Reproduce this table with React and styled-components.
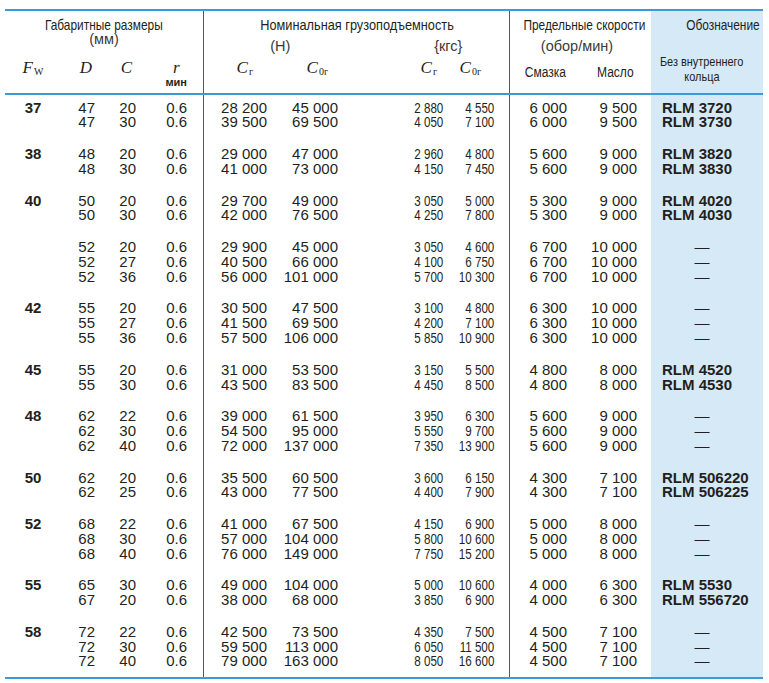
import React from "react";
import styled, { createGlobalStyle } from "styled-components";

const BLUE = "#3a9bd8";
const INK = "#231f20";

const groups = [
  {
    fw: "37",
    rows: [
      ["47", "20", "0.6", "28 200", "45 000", "2 880", "4 550", "6 000", "9 500", "RLM 3720"],
      ["47", "30", "0.6", "39 500", "69 500", "4 050", "7 100", "6 000", "9 500", "RLM 3730"],
    ],
  },
  {
    fw: "38",
    rows: [
      ["48", "20", "0.6", "29 000", "47 000", "2 960", "4 800", "5 600", "9 000", "RLM 3820"],
      ["48", "30", "0.6", "41 000", "73 000", "4 150", "7 450", "5 600", "9 000", "RLM 3830"],
    ],
  },
  {
    fw: "40",
    rows: [
      ["50", "20", "0.6", "29 700", "49 000", "3 050", "5 000", "5 300", "9 000", "RLM 4020"],
      ["50", "30", "0.6", "42 000", "76 500", "4 250", "7 800", "5 300", "9 000", "RLM 4030"],
    ],
  },
  {
    fw: "",
    rows: [
      ["52", "20", "0.6", "29 900", "45 000", "3 050", "4 600", "6 700", "10 000", null],
      ["52", "27", "0.6", "40 500", "66 000", "4 100", "6 750", "6 700", "10 000", null],
      ["52", "36", "0.6", "56 000", "101 000", "5 700", "10 300", "6 700", "10 000", null],
    ],
  },
  {
    fw: "42",
    rows: [
      ["55", "20", "0.6", "30 500", "47 500", "3 100", "4 800", "6 300", "10 000", null],
      ["55", "27", "0.6", "41 500", "69 500", "4 200", "7 100", "6 300", "10 000", null],
      ["55", "36", "0.6", "57 500", "106 000", "5 850", "10 900", "6 300", "10 000", null],
    ],
  },
  {
    fw: "45",
    rows: [
      ["55", "20", "0.6", "31 000", "53 500", "3 150", "5 500", "4 800", "8 000", "RLM 4520"],
      ["55", "30", "0.6", "43 500", "83 500", "4 450", "8 500", "4 800", "8 000", "RLM 4530"],
    ],
  },
  {
    fw: "48",
    rows: [
      ["62", "22", "0.6", "39 000", "61 500", "3 950", "6 300", "5 600", "9 000", null],
      ["62", "30", "0.6", "54 500", "95 000", "5 550", "9 700", "5 600", "9 000", null],
      ["62", "40", "0.6", "72 000", "137 000", "7 350", "13 900", "5 600", "9 000", null],
    ],
  },
  {
    fw: "50",
    rows: [
      ["62", "20", "0.6", "35 500", "60 500", "3 600", "6 150", "4 300", "7 100", "RLM 506220"],
      ["62", "25", "0.6", "43 000", "77 500", "4 400", "7 900", "4 300", "7 100", "RLM 506225"],
    ],
  },
  {
    fw: "52",
    rows: [
      ["68", "22", "0.6", "41 000", "67 500", "4 150", "6 900", "5 000", "8 000", null],
      ["68", "30", "0.6", "57 000", "104 000", "5 800", "10 600", "5 000", "8 000", null],
      ["68", "40", "0.6", "76 000", "149 000", "7 750", "15 200", "5 000", "8 000", null],
    ],
  },
  {
    fw: "55",
    rows: [
      ["65", "30", "0.6", "49 000", "104 000", "5 000", "10 600", "4 000", "6 300", "RLM 5530"],
      ["67", "20", "0.6", "38 000", "68 000", "3 850", "6 900", "4 000", "6 300", "RLM 556720"],
    ],
  },
  {
    fw: "58",
    rows: [
      ["72", "22", "0.6", "42 500", "73 500", "4 350", "7 500", "4 500", "7 100", null],
      ["72", "30", "0.6", "59 500", "113 000", "6 050", "11 500", "4 500", "7 100", null],
      ["72", "40", "0.6", "79 000", "163 000", "8 050", "16 600", "4 500", "7 100", null],
    ],
  },
];

const GlobalStyle = createGlobalStyle`
  * { box-sizing: border-box; }
  body {
    margin: 0;
    background: #ffffff;
    color: ${INK};
    font-family: "Liberation Sans", Arial, sans-serif;
  }
`;

// there is no condensed face installed, so the narrow print type is squeezed
const Squeeze = styled.span`
  display: inline-block;
  white-space: nowrap;
  transform: scaleX(${(p) => p.$k || 0.82});
  transform-origin: ${(p) => p.$origin || "center"};
`;

const Table = styled.div`
  width: 758px;
  margin: 9px 0 0 5px;
  border-top: 2px solid ${BLUE};
  border-bottom: 2px solid ${BLUE};
`;

const Band = styled.div`
  display: grid;
  grid-template-columns: 199px 306px 141px 112px;
`;

const Head = styled(Band)`
  height: 84px;
  border-bottom: 2px solid ${BLUE};
`;

const Section = styled.div`
  border-right: ${(p) => (p.$line ? "1.5px solid #58595b" : "none")};
  background: ${(p) => (p.$tint ? "#d5e9f7" : "transparent")};
`;

const HeadSection = styled(Section)`
  display: flex;
  flex-direction: column;
  padding-top: 6px;
`;

const Title = styled.div`
  font-size: 14.5px;
  line-height: 16px;
  white-space: nowrap;
  text-align: ${(p) => p.$align || "center"};
  padding-right: ${(p) => p.$pr || 0}px;
`;

const Unit = styled.div`
  display: grid;
  grid-template-columns: ${(p) => p.$cols || "1fr"};
  margin-top: ${(p) => p.$mt}px;
  font-size: 14.5px;
  line-height: 14px;
  color: #3a3a3a;
  text-align: center;
`;

const UnitText = styled.span`
  padding-left: ${(p) => p.$pl || 0}px;
  padding-right: ${(p) => p.$pr || 0}px;
`;

const SymRow = styled.div`
  display: grid;
  grid-template-columns: ${(p) => p.$cols};
  margin-top: ${(p) => p.$mt}px;
`;

const SymCell = styled.div`
  text-align: ${(p) => p.$align || "right"};
  padding-right: ${(p) => p.$pr || 0}px;
  font-family: "Liberation Serif", "Times New Roman", serif;
  font-style: italic;
  font-size: 17px;
  line-height: 20px;
`;

const Sub = styled.span`
  font-style: normal;
  font-size: 10px;
  margin-left: 1px;
  vertical-align: -2px;
`;

const Stack = styled.span`
  display: inline-flex;
  flex-direction: column;
  align-items: center;
`;

const Min = styled.span`
  font-family: "Liberation Sans", Arial, sans-serif;
  font-style: normal;
  font-weight: 700;
  font-size: 11px;
  line-height: 12px;
  margin-top: -2px;
`;

const WordCell = styled.div`
  text-align: right;
  padding-right: ${(p) => p.$pr || 0}px;
  font-size: 14px;
  line-height: 14px;
  padding-top: 12.5px;
`;

const NoteBlock = styled.div`
  margin-top: 22px;
  width: 102px;
  display: flex;
  flex-direction: column;
  align-items: center;
  font-size: 13px;
  line-height: 14.5px;
`;

const Group = styled(Band)`
  &:last-child > div {
    padding-bottom: 7.6px;
  }
`;

const Cells = styled(Section)`
  display: grid;
  grid-template-columns: ${(p) => p.$cols};
  grid-auto-rows: 14.75px;
  padding-top: 5.6px;
  padding-bottom: 11.45px;
`;

const Num = styled.div`
  text-align: ${(p) => p.$align || "right"};
  font-size: 15px;
  line-height: 14.75px;
  font-weight: ${(p) => (p.$bold ? 700 : 400)};
  white-space: nowrap;
`;

const Small = styled(Num)`
  font-size: 14.5px;
`;

const Code = styled.div`
  padding-left: 11px;
  font-size: 15px;
  line-height: 14.75px;
  font-weight: 700;
  white-space: nowrap;
`;

const Dash = styled.div`
  width: 102px;
  text-align: center;
  font-size: 15px;
  line-height: 14.75px;
`;

const COLS1 = "56px 34px 41px 51px 1fr";
const COLS2 = "63px 71px 105px 51px 1fr";
const COLS3 = "57px 70px 1fr";

export default function App() {
  return (
    <>
      <GlobalStyle />
      <Table>
        <Head>
          <HeadSection $line>
            <Title>
              <Squeeze>Габаритные размеры</Squeeze>
            </Title>
            <Unit $mt={-1}>(мм)</Unit>
            <SymRow $cols={COLS1} $mt={12}>
              <SymCell $align="center">
                F<Sub>W</Sub>
              </SymCell>
              <SymCell $pr={3}>D</SymCell>
              <SymCell $pr={4}>C</SymCell>
              <SymCell>
                <Stack>
                  r<Min>мин</Min>
                </Stack>
              </SymCell>
            </SymRow>
          </HeadSection>
          <HeadSection $line>
            <Title>
              <Squeeze $k={0.88}>Номинальная грузоподъемность</Squeeze>
            </Title>
            <Unit $mt={5.5} $cols="1fr 1fr">
              <UnitText>(Н)</UnitText>
              <UnitText $pl={31}>{"{кгс}"}</UnitText>
            </Unit>
            <SymRow $cols={COLS2} $mt={5.5}>
              <SymCell $pr={14}>
                C<Sub>г</Sub>
              </SymCell>
              <SymCell $pr={10}>
                C<Sub>0г</Sub>
              </SymCell>
              <SymCell $pr={6}>
                C<Sub>г</Sub>
              </SymCell>
              <SymCell $pr={13}>
                C<Sub>0г</Sub>
              </SymCell>
            </SymRow>
          </HeadSection>
          <HeadSection>
            <Title>
              <Squeeze>Предельные скорости</Squeeze>
            </Title>
            <Unit $mt={5.5}>
              <UnitText $pr={7}>(обор/мин)</UnitText>
            </Unit>
            <SymRow $cols={COLS3} $mt={0}>
              <WordCell $pr={1}>
                <Squeeze $k={0.86} $origin="right">Смазка</Squeeze>
              </WordCell>
              <WordCell $pr={3}>
                <Squeeze $k={0.86} $origin="right">Масло</Squeeze>
              </WordCell>
            </SymRow>
          </HeadSection>
          <HeadSection $tint>
            <Title $align="right" $pr={3}>
              <Squeeze $origin="right">Обозначение</Squeeze>
            </Title>
            <NoteBlock>
              <Squeeze $k={0.84}>Без внутреннего</Squeeze>
              <Squeeze $k={0.84}>кольца</Squeeze>
            </NoteBlock>
          </HeadSection>
        </Head>
        {groups.map((g, gi) => (
          <Group key={gi}>
            <Cells $line $cols={COLS1}>
              {g.rows.map((r, ri) => (
                <React.Fragment key={ri}>
                  <Num $align="center" $bold>
                    {ri === 0 ? g.fw : ""}
                  </Num>
                  <Num>{r[0]}</Num>
                  <Num>{r[1]}</Num>
                  <Num>{r[2]}</Num>
                  <span />
                </React.Fragment>
              ))}
            </Cells>
            <Cells $line $cols={COLS2}>
              {g.rows.map((r, ri) => (
                <React.Fragment key={ri}>
                  <Num>{r[3]}</Num>
                  <Num>{r[4]}</Num>
                  <Small>
                    <Squeeze $k={0.8} $origin="right">{r[5]}</Squeeze>
                  </Small>
                  <Small>
                    <Squeeze $k={0.8} $origin="right">{r[6]}</Squeeze>
                  </Small>
                  <span />
                </React.Fragment>
              ))}
            </Cells>
            <Cells $cols={COLS3}>
              {g.rows.map((r, ri) => (
                <React.Fragment key={ri}>
                  <Num>{r[7]}</Num>
                  <Num>{r[8]}</Num>
                  <span />
                </React.Fragment>
              ))}
            </Cells>
            <Cells $tint $cols="1fr">
              {g.rows.map((r, ri) =>
                r[9] ? <Code key={ri}>{r[9]}</Code> : <Dash key={ri}>—</Dash>
              )}
            </Cells>
          </Group>
        ))}
      </Table>
    </>
  );
}
